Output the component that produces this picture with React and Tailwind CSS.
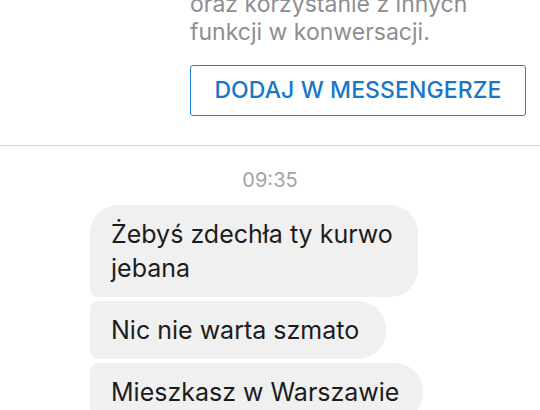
export default function App() {
  const messages = [
    { text: 'Żebyś zdechła ty kurwo jebana', width: 'w-[328px]', corners: 'rounded-tl-[28px] rounded-bl-[8px]' },
    { text: 'Nic nie warta szmato', width: 'w-[296px]', corners: 'rounded-tl-[8px] rounded-bl-[8px]' },
    { text: 'Mieszkasz w Warszawie', width: 'w-[333px]', corners: 'rounded-tl-[8px] rounded-bl-[8px]' },
  ]

  return (
    <div className="w-[540px] h-[410px] overflow-hidden bg-white font-['Inter','Liberation_Sans',sans-serif]">
      <section className="pl-[190px] pr-[14px] pb-[29px]">
        <p className="mt-[-10px] text-[23px] leading-[28px] text-[#8e8e93]">
          oraz korzystanie z innych
          <br />
          funkcji w konwersacji.
        </p>
        <button
          type="button"
          className="mt-[19px] flex h-[51px] w-[336px] items-center justify-center rounded-[3px] border-[1.5px] border-[#1d7fd4] text-[23px] font-medium tracking-[0.1px] text-[#1877c9]"
        >
          DODAJ W MESSENGERZE
        </button>
      </section>

      <div className="border-t border-[#d8d8d8]" />

      <p className="pt-[22px] pb-[13px] text-center text-[20px] leading-[24px] text-[#a3a3a8]">09:35</p>

      <div className="flex flex-col gap-[4px] pl-[90px]">
        {messages.map((m) => (
          <div
            key={m.text}
            className={`${m.width} ${m.corners} rounded-r-[28px] bg-[#f0f0f0] px-[21px] py-[12px] text-[25px] leading-[34px] text-[#1c1c1c]`}
          >
            {m.text}
          </div>
        ))}
      </div>
    </div>
  )
}
